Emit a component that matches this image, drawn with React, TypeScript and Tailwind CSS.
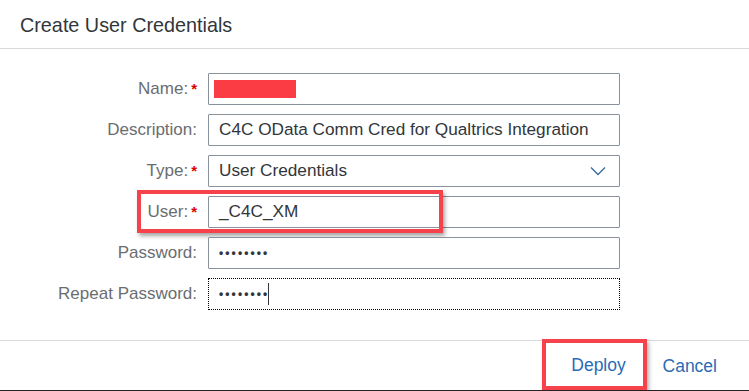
import React from 'react';

// Create User Credentials dialog (SAP Fiori style)

const font = { fontFamily: '"Liberation Sans", Arial, sans-serif' };

function Label({ text, required }: { text: string; required?: boolean }) {
  return (
    <div className="w-[198px] shrink-0 flex justify-end items-center pr-px text-[17px] text-[#6a6d70]">
      <span>{text}</span>
      {required && <span className="ml-[3px] text-[#e00000] text-[15px] font-bold">*</span>}
    </div>
  );
}

function Row({ children }: { children: React.ReactNode }) {
  return <div className="relative flex items-center h-[32px] gap-[10px]">{children}</div>;
}

function Field({ children, dotted }: { children?: React.ReactNode; dotted?: boolean }) {
  return (
    <div
      className={
        'w-[412px] h-[32px] flex items-center px-[10px] text-[17.2px] text-[#32363a] bg-white ' +
        (dotted ? 'border border-dotted border-black' : 'border border-[#89919a] rounded-[1px]')
      }
    >
      {children}
    </div>
  );
}

function Dots() {
  return <span className="text-[12px] font-bold tracking-[2.1px] text-[#32363a]">••••••••</span>;
}

export default function App() {
  return (
    <div className="w-[749px] h-[391px] bg-white flex flex-col overflow-hidden" style={font}>
      <div className="h-[49px] shrink-0 flex items-center pt-[3px] px-[20px] border-b border-[#d9d9d9]">
        <h1 className="text-[19.8px] text-[#32363a]">Create User Credentials</h1>
      </div>

      <div className="flex-1 flex flex-col gap-[9px] pt-[24px]">
        <Row>
          <Label text="Name:" required />
          <Field>
            <div className="w-[82px] h-[18px] bg-[#fb3c45] -ml-[5px]" />
          </Field>
        </Row>
        <Row>
          <Label text="Description:" />
          <Field>C4C OData Comm Cred for Qualtrics Integration</Field>
        </Row>
        <Row>
          <Label text="Type:" required />
          <Field>
            <span className="flex-1">User Credentials</span>
            <svg width="16" height="10" viewBox="0 0 16 10" className="mr-[3px]">
              <path d="M1 1.5 L8 8.5 L15 1.5" fill="none" stroke="#3a6ea5" strokeWidth="1.4" />
            </svg>
          </Field>
        </Row>
        <Row>
          <Label text="User:" required />
          <Field>_C4C_XM</Field>
          <div className="absolute left-[137px] top-[-6px] w-[306px] h-[43px] border-[4px] border-[#f5424b] shadow-[2px_3px_4px_rgba(0,0,0,0.35)] pointer-events-none" />
        </Row>
        <Row>
          <Label text="Password:" />
          <Field>
            <Dots />
          </Field>
        </Row>
        <Row>
          <Label text="Repeat Password:" />
          <Field dotted>
            <Dots />
            <span className="w-px h-[22px] bg-[#32363a] -ml-[1px]" />
          </Field>
        </Row>
      </div>

      <div className="h-[50px] shrink-0 border-t border-[#d9d9d9] flex items-stretch justify-end pr-[32px]">
        <button className="w-[105px] mt-[-2px] pt-[2px] pl-[9px] border-[4px] border-[#f5424b] text-[17.5px] text-[#2a6cb5] shadow-[2px_3px_4px_rgba(0,0,0,0.3)]">
          Deploy
        </button>
        <button className="ml-[16px] pt-[2px] text-[17.5px] text-[#2a6cb5]">Cancel</button>
      </div>
      <div className="h-px shrink-0 bg-[#222]" />
    </div>
  );
}
